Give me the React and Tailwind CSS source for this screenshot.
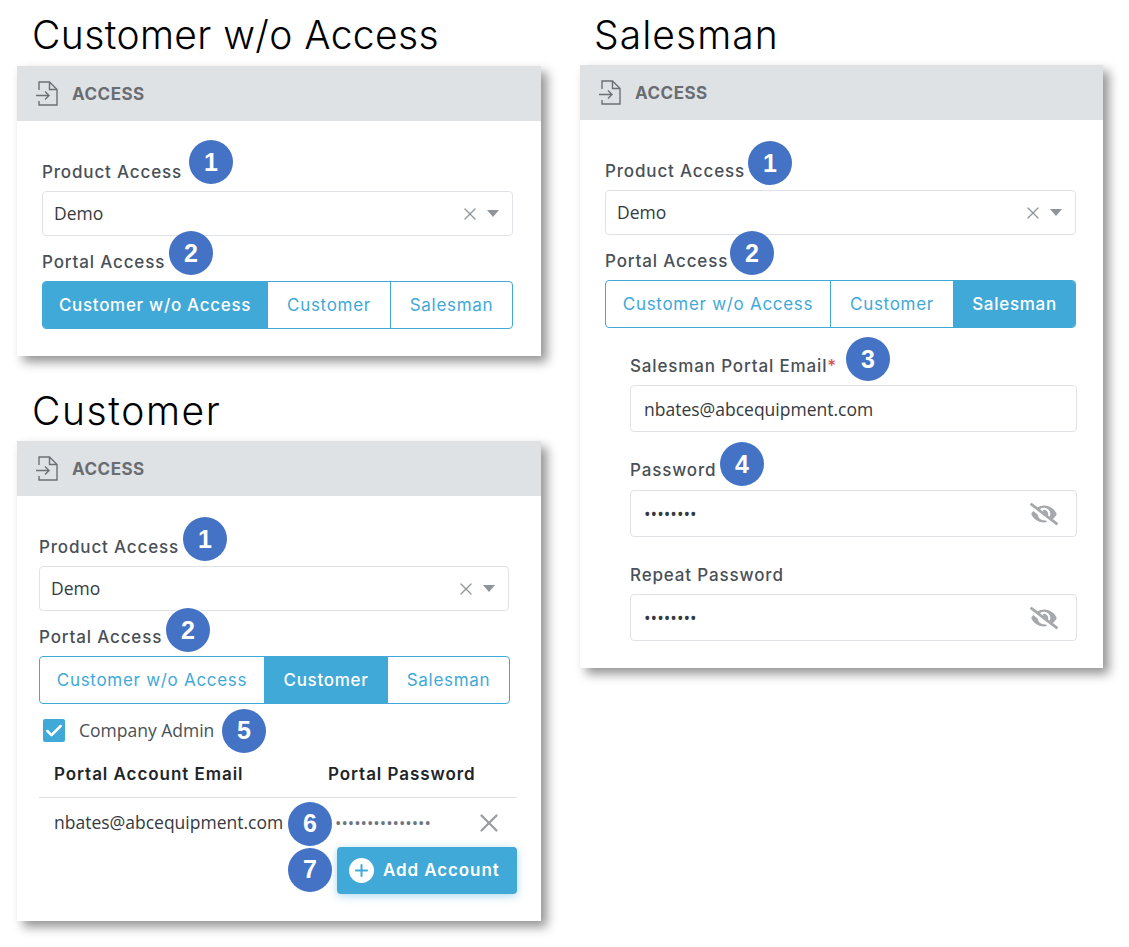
import { Check, Plus, X } from 'lucide-react';
import { FaEyeSlash } from 'react-icons/fa';

const headingFont = "font-['Inter',sans-serif]";
const bodyFont = "font-['Open_Sans',sans-serif]";

function Badge({ n, className }) {
  return (
    <span
      className={`absolute z-10 flex h-[44px] w-[44px] items-center justify-center rounded-full bg-[#4472c4] font-['Liberation_Sans',sans-serif] text-[25px] font-bold tracking-normal text-white ${className}`}
    >
      {n}
    </span>
  );
}

function DocIcon() {
  return (
    <svg width="22" height="25" viewBox="0 0 22 25" fill="none" stroke="#6c7075" strokeWidth="1.4">
      <path d="M3 9V1h10.5L21 8.5V24H3v-4" />
      <path d="M13.5 1v7.5H21" />
      <path d="M0 14.5h13M9 10.5l4 4-4 4" />
    </svg>
  );
}

function Label({ children, badge, className = '' }) {
  return (
    <div className={`relative h-[20px] text-[17px] leading-[20px] font-medium tracking-[0.85px] text-[#495057] ${headingFont} ${className}`}>
      {children}
      {badge}
    </div>
  );
}

function Segments({ active }) {
  const items = ['Customer w/o Access', 'Customer', 'Salesman'];
  return (
    <div className={`mt-[9px] grid h-[48px] w-[471px] grid-cols-[224px_123px_1fr] overflow-hidden rounded-[4px] border border-[#41a9d8] text-[17px] tracking-[0.7px] ${headingFont}`}>
      {items.map((item, i) => (
        <div
          key={item}
          className={`flex items-center justify-center pt-[1px] ${i > 0 ? 'border-l border-[#41a9d8]' : ''} ${
            item === active ? 'bg-[#41a9d8] font-medium text-white' : 'text-[#41a9d8]'
          }`}
        >
          {item}
        </div>
      ))}
    </div>
  );
}

function AccessFields({ active, badge1, badge2, width = 'w-[471px]' }) {
  return (
    <>
      <Label badge={<Badge n={1} className={badge1} />}>Product Access</Label>
      <div className={`mt-[9px] flex h-[45px] ${width} items-center rounded-[4px] border border-[#e0e3e6] pl-[11px] pr-[13px] text-[17.5px] text-[#343a40] ${bodyFont}`}>
        <span>Demo</span>
        <X size={20} strokeWidth={1.5} className="ml-auto text-[#8f9499]" />
        <svg width="12" height="7" viewBox="0 0 12 7" className="ml-[7px]">
          <path d="M0 0h12L6 7z" fill="#8f9499" />
        </svg>
      </div>
      <Label className="mt-[16px]" badge={<Badge n={2} className={badge2} />}>
        Portal Access
      </Label>
      <Segments active={active} />
    </>
  );
}

function Card({ children, className = '', width = 'w-[524px]' }) {
  return (
    <div className={`${width} bg-white shadow-[6px_6px_10px_rgba(0,0,0,0.42)]`}>
      <div className="flex h-[55px] items-center gap-[14px] bg-[#dfe2e5] pl-[19px]">
        <DocIcon />
        <span className={`pt-[2px] text-[17px] font-bold tracking-[0.5px] text-[#696d72] ${headingFont}`}>ACCESS</span>
      </div>
      <div className={`pt-[41px] pb-[27px] ${className}`}>{children}</div>
    </div>
  );
}

function TextField({ children, icon, className = 'mt-[9px]' }) {
  return (
    <div className={`${className} flex h-[47px] w-[447px] items-center rounded-[4px] border border-[#e0e3e6] pl-[13px] pr-[18px] text-[17.5px] text-[#343a40] ${bodyFont}`}>
      <span className="pt-[1px]">{children}</span>
      {icon && <FaEyeSlash size={28} className="ml-auto text-[#a5a9ad]" />}
    </div>
  );
}

const dots = '••••••••';

export default function App() {
  return (
    <div className="flex min-h-[947px] gap-[39px] bg-white pl-[17px]">
      <div>
        <div className={`flex h-[66px] items-start pl-[15px] pt-[11px] text-[39px] leading-[48px] font-light tracking-[0.4px] text-black ${headingFont}`}>
          Customer w/o Access
        </div>
        <Card className="pl-[25px]">
          <AccessFields active="Customer w/o Access" badge1="left-[147px] top-[-22px]" badge2="left-[127px] top-[-21px]" />
        </Card>

        <div className={`flex h-[85px] items-end pb-[6px] pl-[15px] text-[39px] leading-[48px] font-light tracking-[1.6px] text-black ${headingFont}`}>
          Customer
        </div>
        <Card className="pl-[22px]">
          <AccessFields active="Customer" badge1="left-[144px] top-[-20px]" badge2="left-[127px] top-[-19px]" width="w-[470px]" />
          <div className={`relative mt-[15px] flex h-[23px] items-center gap-[14px] pl-[4px] text-[17.5px] text-[#495057] ${bodyFont}`}>
            <span className="flex h-[23px] w-[22px] items-center justify-center rounded-[2px] bg-[#41a9d8]">
              <Check size={20} strokeWidth={3} className="text-white" />
            </span>
            Company Admin
            <Badge n={5} className="left-[183px] top-[-10px]" />
          </div>
          <div className={`flex w-[478px] border-b border-[#e0e3e6] pl-[15px] pt-[22px] pb-[13px] text-[17px] leading-[20px] font-semibold tracking-[0.95px] text-[#212529] ${headingFont}`}>
            <span className="w-[274px]">Portal Account Email</span>
            <span>Portal Password</span>
          </div>
          <div className={`relative flex h-[49px] w-[478px] items-center pl-[15px] text-[17.5px] text-[#343a40] ${bodyFont}`}>
            <span className="w-[281px]">nbates@abcequipment.com</span>
            <span className="text-[17px] text-[#6c757d]">•••••••••••••••</span>
            <X size={30} strokeWidth={1.8} className="absolute right-[13px] top-[10px] text-[#999da1]" />
            <Badge n={6} className="left-[249px] top-[4px]" />
          </div>
          <div className="relative flex w-[478px] justify-end">
            <div className={`flex h-[47px] w-[180px] items-center gap-[9px] rounded-[4px] bg-[#41a9d8] pl-[12px] text-[17px] font-semibold tracking-[0.9px] text-white shadow-[0_2px_8px_rgba(65,169,216,0.45)] ${headingFont}`}>
              <span className="flex h-[25px] w-[25px] items-center justify-center rounded-full bg-white">
                <Plus size={19} strokeWidth={2.5} className="text-[#41a9d8]" />
              </span>
              Add Account
            </div>
            <Badge n={7} className="left-[249px] top-[1px]" />
          </div>
        </Card>
      </div>

      <div>
        <div className={`flex h-[65px] items-start pl-[14px] pt-[11px] text-[39px] leading-[48px] font-light tracking-[1.05px] text-black ${headingFont}`}>
          Salesman
        </div>
        <Card className="pl-[25px]" width="w-[523px]">
          <AccessFields active="Salesman" badge1="left-[143px] top-[-20px]" badge2="left-[125px] top-[-20px]" />
          <div className="pl-[25px]">
            <Label className="mt-[28px]" badge={<Badge n={3} className="left-[216px] top-[-19px]" />}>
              Salesman Portal Email<span className="text-[#d9534f]">*</span>
            </Label>
            <TextField>nbates@abcequipment.com</TextField>
            <Label className="mt-[28px]" badge={<Badge n={4} className="left-[90px] top-[-18px]" />}>
              Password
            </Label>
            <TextField icon className="mt-[10px]">
              {dots}
            </TextField>
            <Label className="mt-[28px]">Repeat Password</Label>
            <TextField icon>{dots}</TextField>
          </div>
        </Card>
      </div>
    </div>
  );
}
